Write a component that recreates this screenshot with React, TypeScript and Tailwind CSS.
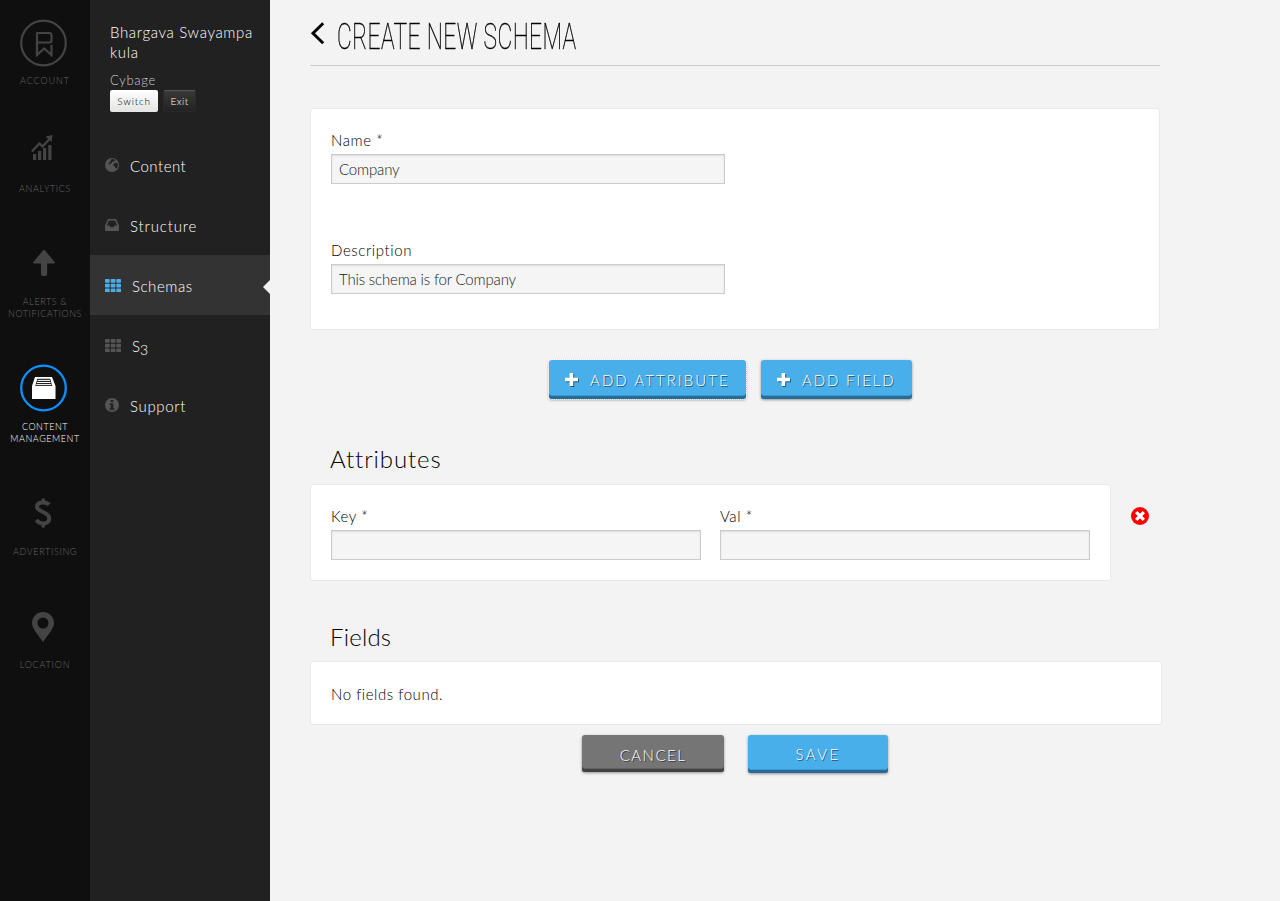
import React from "react";

type IconProps = { className?: string };

const AccountIcon = () => (
  <svg width="48" height="48" viewBox="0 0 48 48" fill="none" stroke="currentColor">
    <circle cx="24.500" cy="24" r="22.300" strokeWidth="2.200" />
    <path d="M18 36V14h12.500a2 2 0 0 1 2 2v5.500a2 2 0 0 1-2 2H19" strokeWidth="2.200" strokeLinejoin="round" />
    <path d="M18 23.500V36l7.200-6.500L32.500 36V26" strokeWidth="2.200" />
  </svg>
);

const AnalyticsIcon = () => (
  <svg width="22" height="26" viewBox="0 0 22 26" fill="currentColor">
    <path d="M2 20h3.200v6H2zM7 17h3.200v9H7zM12 14h3.200v12H12zM17.300 11h3.200v15h-3.200z" />
    <path d="M.8 17.500L8.500 9.500l3 3L19 4.500" fill="none" stroke="currentColor" strokeWidth="2.300" />
    <path d="M14.500 2.500L21.500 1l-1 7z" />
  </svg>
);

const ArrowIcon = () => (
  <svg width="24" height="28" viewBox="0 0 24 28" fill="currentColor">
    <path d="M12 1Q12.800 1 13.500 2L23 13.500Q23 14.500 22 14.500H15.200V25Q15.200 27 13.200 27H11Q9 27 9 25V14.500H2Q1 14.500 1 13.500L10.500 2Q11.200 1 12 1z" />
  </svg>
);

const DrawerIcon = () => (
  <svg width="48" height="48" viewBox="0 0 48 48">
    <circle cx="24.500" cy="24" r="22.300" fill="none" stroke="#0a91ff" strokeWidth="2.300" />
    <path d="M16 13h17L36.500 22v13H13V22z" fill="#fff" />
    <path d="M18.200 14.700h13L33.300 22H16.300z" fill="#222" />
    <path d="M18.500 16.400h12.500M17.900 18.500h13.700M17.300 20.600h15" stroke="#fff" strokeWidth="1" />
  </svg>
);

const DollarIcon = () => (
  <svg width="20" height="30" viewBox="0 0 20 30" fill="none" stroke="currentColor">
    <path d="M16.200 6.700C13.500 3.700 4 3 4 8.800c0 5.200 12.200 4.800 12.200 11.400C16.200 27 7 26.700 3.200 22" strokeWidth="4" />
    <path d="M10.300.5v4M10.300 25v4.500" strokeWidth="3.200" />
  </svg>
);

const PinIcon = () => (
  <svg width="24" height="32" viewBox="0 0 24 32" fill="currentColor" fillRule="evenodd">
    <path d="M12 1a11 11 0 0 1 11 11C23 18 16.500 24 12 31 7.500 24 1 18 1 12A11 11 0 0 1 12 1zm0 5.500a5.500 5.500 0 1 0 0 11 5.500 5.500 0 0 0 0-11z" />
  </svg>
);

const GlobeIcon = ({ className }: IconProps) => (
  <svg className={className} width="14" height="14" viewBox="0 0 14 14">
    <circle cx="7" cy="7" r="7" fill="currentColor" />
    <path d="M6.300 1.200l2.200-.3 1.600 1-1.200 1.500-1.600.3-.8 1.500-1.600.5.300.900-.9-.200-1-1 .900-.5 1-1.200zM8.500 6l2-1.200 2 .3.500 2-.8 2.800-1.700.6-.7-2-1.500-.5z" fill="#212121" />
  </svg>
);

const InboxIcon = ({ className }: IconProps) => (
  <svg className={className} width="14" height="12" viewBox="0 0 14 12" fill="currentColor" fillRule="evenodd">
    <path d="M3 0h8l3 6.500V11q0 1-1 1H1q-1 0-1-1V6.500zM3.900 1.600L1.800 6.500h2.700L5.400 8.200h3.200l.9-1.700h2.700L10.100 1.600z" />
  </svg>
);

const GridIcon = ({ className }: IconProps) => (
  <svg className={className} width="16" height="13" viewBox="0 0 16 13" fill="currentColor">
    {[0, 4.7, 9.4].map((y) =>
      [0, 5.700, 11.300].map((x) => <rect key={`${x}-${y}`} x={x} y={y} width="4.700" height="3.700" rx=".7" />)
    )}
  </svg>
);

const InfoIcon = ({ className }: IconProps) => (
  <svg className={className} width="14" height="14" viewBox="0 0 14 14">
    <circle cx="7" cy="7" r="7" fill="currentColor" />
    <path d="M5.700 2h2.600v2H5.700zM4.800 5.200h3.500v4.900h1v1.700H4.700v-1.700h1V6.900h-.9z" fill="#212121" />
  </svg>
);

const PlusIcon = () => (
  <svg className="shrink-0 drop-shadow-[1px_1px_0_rgba(0,0,0,0.5)]" width="13" height="13" viewBox="0 0 13 13" fill="#fff">
    <path d="M4.600 0h3.600v4.700H13v3.500H8.200V13H4.600V8.200H0V4.700h4.600z" />
  </svg>
);

const primaryItems = [
  { label: "ACCOUNT", icon: <AccountIcon />, height: "h-[105px]", gap: "mt-[9px]", text: "tracking-[0.95px]", shift: "" },
  { label: "ANALYTICS", icon: <AnalyticsIcon />, height: "h-[115px]", gap: "mt-[12px]", text: "tracking-[0.65px]", shift: "pr-[2px] pb-[2px]" },
  { label: "ALERTS &\nNOTIFICATIONS", icon: <ArrowIcon />, height: "h-[125px]", gap: "mt-[10px]", text: "tracking-[0.6px]", shift: "pl-[2px]" },
  { label: "CONTENT\nMANAGEMENT", icon: <DrawerIcon />, height: "h-[125px]", gap: "mt-[10px]", text: "tracking-[0.55px]", shift: "", active: true },
  { label: "ADVERTISING", icon: <DollarIcon />, height: "h-[114px]", gap: "mt-[10px]", text: "tracking-[0.65px]", shift: "" },
  { label: "LOCATION", icon: <PinIcon />, height: "h-[114px]", gap: "mt-[9px]", text: "tracking-[0.8px]", shift: "" },
];

function PrimaryNav() {
  return (
    <nav className="flex w-[90px] shrink-0 flex-col bg-[#0f0f0f] pt-5">
      {primaryItems.map((item) => (
        <div key={item.label} className={`flex flex-col ${item.height}`}>
          <div className={`flex h-[46px] w-[86px] items-center justify-center text-[#444] ${item.shift}`}>{item.icon}</div>
          <div
            className={`whitespace-pre text-center text-[9px] leading-[12px] ${item.gap} ${item.text} ${item.active ? "text-white" : "text-[#666]"}`}
          >
            {item.label}
          </div>
        </div>
      ))}
    </nav>
  );
}

const menuItems = [
  { label: "Content", icon: <GlobeIcon className="mr-[11px]" />, text: "tracking-[0.5px]" },
  { label: "Structure", icon: <InboxIcon className="mr-[11px]" />, text: "tracking-[0.85px]" },
  { label: "Schemas", icon: <GridIcon className="mr-[11px]" />, text: "tracking-[0.55px]", active: true },
  { label: "S3", icon: <GridIcon className="mr-[11px]" />, text: "" },
  { label: "Support", icon: <InfoIcon className="mr-[11px]" />, text: "tracking-[0.65px]" },
];

function SecondaryNav() {
  return (
    <aside className="w-[180px] shrink-0 bg-[#212121] text-white">
      <div className="h-[135px] pl-5 pt-[22px]">
        <div className="whitespace-nowrap text-[15px] leading-5 tracking-[0.65px]">
          Bhargava Swayampa
          <br />
          kula
        </div>
        <div className="mt-[9px] text-[13px] leading-[18px] tracking-[0.7px] text-[#ccc]">Cybage</div>
        <div className="mt-px flex gap-[5px] text-[10px] leading-[22px]">
          <button className="h-[22px] w-12 rounded-[2px] bg-linear-to-b from-white to-[#e4e4e4] tracking-[0.8px] text-black">Switch</button>
          <button className="h-[22px] w-[33px] rounded-[2px] border border-[#292929] border-t-[#555] bg-linear-to-b from-[#393939] to-[#222] leading-5 tracking-[0.5px]">Exit</button>
        </div>
      </div>
      <ul>
        {menuItems.map((item) => (
          <li key={item.label} className={`relative flex h-[60px] items-center pl-[15px] text-[15px] ${item.active ? "bg-[#333]" : ""}`}>
            <span className={`flex h-[14px] items-center ${item.active ? "text-[#49afeb]" : "text-[#555]"}`}>{item.icon}</span>
            <span className={`pt-px leading-5 ${item.text}`}>
              {item.label === "S3" ? <>S<span className="inline-block translate-y-[3px] text-[14px] leading-none">3</span></> : item.label}
            </span>
            {item.active && (
              <svg className="absolute right-0 top-[25px]" width="7" height="14" viewBox="0 0 7 14">
                <path d="M7 0v14L0 7z" fill="#f3f3f3" />
              </svg>
            )}
          </li>
        ))}
      </ul>
    </aside>
  );
}

function Field({ label, value, width }: { label: string; value: string; width: string }) {
  return (
    <label className={`block ${width}`}>
      <span className="block text-[15px] leading-5 tracking-[0.6px] text-black">{label}</span>
      <input
        defaultValue={value}
        className="mt-1 block h-[30px] w-full border border-[#ccc] bg-[#f5f5f5] px-[7px] text-[15px] font-light tracking-[-0.16px] text-[#222] shadow-[inset_0_1px_2px_rgba(0,0,0,0.1)] outline-none"
      />
    </label>
  );
}

const card = "rounded-[3px] border border-[#e9e9e9] bg-white";
const button =
  "flex items-center rounded-[3px] text-[15px] text-white [text-shadow:1px_1px_0_rgba(0,0,0,0.55)]";
const blue = "bg-[#49afeb] shadow-[inset_0_-3px_0_#276c96,inset_0_-4px_0_#3d98cd,0_1px_3px_rgba(0,0,0,0.4)]";
const gray = "bg-[#757575] shadow-[inset_0_-3px_0_#414141,inset_0_-4px_0_#646464,0_1px_3px_rgba(0,0,0,0.4)]";

export default function App() {
  return (
    <div className="flex h-[901px] w-[1280px] overflow-hidden bg-[#f3f3f3] font-['Lato',sans-serif] font-light">
      <PrimaryNav />
      <SecondaryNav />
      <main className="w-[1010px] pl-10">
        <header className="flex h-[66px] w-[850px] border-b border-[#ccc]">
          <svg className="mt-[22px]" width="15" height="23" viewBox="0 0 15 23" fill="none" stroke="#05070d" strokeWidth="3">
            <path d="M13.200 1.300L3 11.300l10.200 10" />
          </svg>
          <h1 className="ml-[12px] mt-[13px] origin-left scale-x-[0.615] whitespace-nowrap font-['Roboto',sans-serif] text-[37px] font-thin leading-[48px] tracking-[0.7px] text-black [-webkit-text-stroke:0.45px_black]">
            CREATE NEW SCHEMA
          </h1>
        </header>

        <section className={`mt-[42px] h-[222px] w-[850px] px-5 pt-[21px] ${card}`}>
          <Field label="Name *" value="Company" width="w-[394px]" />
          <div className="h-14" />
          <Field label="Description" value="This schema is for Company" width="w-[394px]" />
        </section>

        <div className="mt-[30px] flex gap-[15px] pl-[239px]">
          <button className={`${button} ${blue} h-[39px] w-[197px] gap-[12px] pl-4 tracking-[2.05px] outline-1 outline-dotted outline-white`}>
            <PlusIcon />
            <span className="whitespace-nowrap pt-[2px]">ADD ATTRIBUTE</span>
          </button>
          <button className={`${button} ${blue} h-[39px] w-[151px] gap-[12px] pl-4 tracking-[1.85px]`}>
            <PlusIcon />
            <span className="whitespace-nowrap pt-[2px]">ADD FIELD</span>
          </button>
        </div>

        <h2 className="mt-[44px] pl-5 text-[24px] leading-8 tracking-[0.9px] text-black">Attributes</h2>
        <div className="mt-[9px] flex">
          <section className={`flex h-[97px] w-[801px] gap-[19px] px-5 pt-[21px] ${card}`}>
            <Field label="Key *" value="" width="w-[370px]" />
            <Field label="Val *" value="" width="w-[370px]" />
          </section>
          <svg className="ml-5 mt-[23px]" width="18" height="18" viewBox="0 0 18 18">
            <circle cx="9" cy="9" r="9" fill="#f00" />
            <path d="M5.200 5.200l7.600 7.600M12.800 5.200l-7.600 7.600" stroke="#fff" strokeWidth="3.300" />
          </svg>
        </div>

        <h2 className="mt-[40px] pl-5 text-[24px] leading-8 tracking-[0.2px] text-black">Fields</h2>
        <section className={`mt-[8px] h-16 w-[852px] px-5 pt-[22px] text-[15px] leading-5 tracking-[0.55px] text-black ${card}`}>
          No fields found.
        </section>

        <div className="mt-[10px] flex items-start gap-6 pl-[272px]">
          <button className={`${button} ${gray} h-[37px] w-[142px] justify-center pt-[4px] tracking-[1.5px]`}>CANCEL</button>
          <button className={`${button} ${blue} h-[38px] w-[140px] justify-center pt-px tracking-[2.4px]`}>SAVE</button>
        </div>
      </main>
    </div>
  );
}
